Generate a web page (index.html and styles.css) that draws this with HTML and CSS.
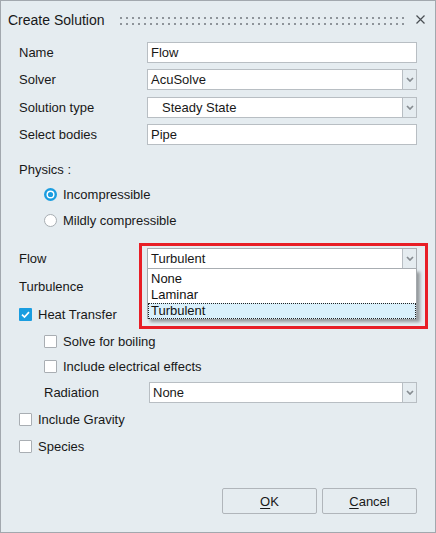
FILE: index.html
```html
<!DOCTYPE html>
<html>
<head>
<meta charset="utf-8">
<link rel="stylesheet" href="styles.css">
</head>
<body>
<div class="dialog">
  <div class="titlebar">
    <span class="title">Create Solution</span>
    <svg class="grip" height="8"><defs><pattern id="dots" width="6" height="6" patternUnits="userSpaceOnUse"><rect x="0" y="0" width="2" height="2" fill="#8e949a"/></pattern></defs><rect x="0" y="0" width="100%" height="8" fill="url(#dots)"/></svg>
    <svg class="close" width="9" height="9" viewBox="0 0 9 9"><path d="M0.5 0.5 L8.5 8.5 M8.5 0.5 L0.5 8.5" stroke="#4a4f54" stroke-width="1.2"/></svg>
  </div>

  <div class="form">
    <div class="row"><span class="label">Name</span><div class="field">Flow</div></div>
    <div class="row"><span class="label">Solver</span>
      <div class="combo"><div class="combo-text">AcuSolve</div><div class="combo-btn"><svg width="8" height="5" viewBox="0 0 8 5"><path d="M1 1 L4 4 L7 1" stroke="#868c91" stroke-width="1.7" fill="none"/></svg></div></div>
    </div>
    <div class="row"><span class="label">Solution type</span>
      <div class="combo"><div class="combo-text indent">Steady State</div><div class="combo-btn"><svg width="8" height="5" viewBox="0 0 8 5"><path d="M1 1 L4 4 L7 1" stroke="#868c91" stroke-width="1.7" fill="none"/></svg></div></div>
    </div>
    <div class="row"><span class="label">Select bodies</span><div class="field">Pipe</div></div>
  </div>

  <div class="physics-label">Physics :</div>
  <div class="option sub"><svg class="radio" width="13" height="13" viewBox="0 0 13 13"><circle cx="6.5" cy="6.5" r="6.5" fill="#1a9de0"/><circle cx="6.5" cy="6.5" r="4" fill="#fff"/><circle cx="6.5" cy="6.5" r="2.6" fill="#1a9de0"/></svg><span>Incompressible</span></div>
  <div class="option sub"><svg class="radio" width="13" height="13" viewBox="0 0 13 13"><circle cx="6.5" cy="6.5" r="6" fill="#fff" stroke="#a7adb2" stroke-width="1"/></svg><span>Mildly compressible</span></div>

  <div class="section">
    <div class="row2">
      <span class="label">Flow</span>
      <div class="combo-wrap">
        <div class="combo dark"><div class="combo-text">Turbulent</div><div class="combo-btn"><svg width="8" height="5" viewBox="0 0 8 5"><path d="M1 1 L4 4 L7 1" stroke="#868c91" stroke-width="1.7" fill="none"/></svg></div></div>
        <div class="dropdown">
          <div class="item">None</div>
          <div class="item">Laminar</div>
          <div class="item selected">Turbulent</div>
        </div>
      </div>
    </div>
    <div class="row2 tall"><span class="label">Turbulence</span></div>
    <div class="option"><span class="check on"><svg width="13" height="13" viewBox="0 0 13 13"><path d="M3 6.6 L5.5 9 L10 4.2" stroke="#fff" stroke-width="1.7" fill="none"/></svg></span><span>Heat Transfer</span></div>
    <div class="option sub2"><span class="check"></span><span>Solve for boiling</span></div>
    <div class="option sub2 short"><span class="check"></span><span>Include electrical effects</span></div>
    <div class="row3">
      <span class="label">Radiation</span>
      <div class="combo"><div class="combo-text">None</div><div class="combo-btn"><svg width="8" height="5" viewBox="0 0 8 5"><path d="M1 1 L4 4 L7 1" stroke="#868c91" stroke-width="1.7" fill="none"/></svg></div></div>
    </div>
    <div class="option"><span class="check"></span><span>Include Gravity</span></div>
    <div class="option"><span class="check"></span><span>Species</span></div>
  </div>

  <div class="footer">
    <div class="btn"><u>O</u>K</div>
    <div class="btn"><u>C</u>ancel</div>
  </div>

  <div class="highlight"></div>
</div>
</body>
</html>
```

FILE: styles.css
```css
* { box-sizing: border-box; }
html, body { margin: 0; padding: 0; }
body {
  font-family: "Liberation Sans", Arial, sans-serif;
  font-size: 13px;
  color: #181818;
  background: #e5ecf0;
}
.dialog {
  position: relative;
  width: 436px;
  height: 533px;
  border: 1px solid #a2a8ae;
  background: #e5ecf0;
  display: flex;
  flex-direction: column;
}
.titlebar {
  height: 37.5px;
  display: flex;
  align-items: center;
  padding: 0 10px 0 7px;
}
.title { font-size: 14px; white-space: nowrap; }
.grip { flex: 1; margin-left: 15px; height: 8px; margin-top: 2px; }
.close { margin-left: 8px; flex: none; }

.form {
  padding: 0 18px;
}
.row {
  height: 27.5px;
  display: grid;
  grid-template-columns: 128px 270px;
  align-items: center;
}
.field {
  height: 21px;
  border: 1px solid #b8bec3;
  background: #fff;
  padding-left: 3px;
  line-height: 19px;
}
.combo {
  height: 21px;
  border: 1px solid #b8bec3;
  background: #fff;
  display: flex;
}
.combo.dark { border-color: #a9aeb3; }
.combo-text {
  flex: 1;
  padding-left: 3px;
  line-height: 19px;
}
.combo-text.indent { padding-left: 14px; }
.combo-btn {
  width: 14px;
  border-left: 1px solid #b8bec3;
  background: #e5ecf0;
  display: flex;
  align-items: center;
  justify-content: center;
}
.physics-label {
  margin-top: 10.5px;
  height: 22px;
  line-height: 22px;
  padding-left: 18px;
}
.option {
  height: 26px;
  display: flex;
  align-items: center;
  gap: 6px;
  padding-left: 18px;
}
.option.sub { padding-left: 43px; }
.radio { flex: none; }

.section {
  margin-top: 12px;
  padding: 0 18px;
}
.section .option { height: 27px; padding-left: 0; }
.section .option.sub2 { padding-left: 25px; }
.section .option.short { height: 23px; }
.row2 {
  height: 27px;
  display: grid;
  grid-template-columns: 128px 270px;
  align-items: center;
}
.row2.tall { height: 29px; }
.row3 {
  height: 28px;
  display: grid;
  grid-template-columns: 105px 268px;
  align-items: center;
  padding-left: 25px;
}
.check {
  width: 13px;
  height: 13px;
  border: 1px solid #a9aeb3;
  background: #fff;
  border-radius: 1px;
  flex: none;
  display: block;
}
.check.on {
  border: none;
  background: #1a9de0;
}
.check svg { display: block; }

.combo-wrap { position: relative; }
.dropdown {
  position: absolute;
  left: 0;
  top: 21px;
  width: 270px;
  height: 50px;
  background: #fff;
  border: 1px solid #a4a9ad;
  border-top: none;
  box-shadow: 3px 3px 3px rgba(0, 0, 0, 0.35);
  padding-top: 2px;
  z-index: 2;
  color: #111;
}
.item {
  height: 16px;
  line-height: 16px;
  padding-left: 3px;
}
.item.selected {
  background: #d9f0fb;
  outline: 1px dotted #222;
  outline-offset: -1px;
  padding-left: 3px;
}

.footer {
  margin-top: auto;
  display: flex;
  justify-content: flex-end;
  gap: 5px;
  padding: 0 18px 18px;
}
.btn {
  width: 95px;
  height: 26px;
  border: 1px solid #b0b5ba;
  border-radius: 2px;
  background: #e5ecf0;
  display: flex;
  align-items: center;
  justify-content: center;
}
.btn u { text-decoration-thickness: 1px; text-underline-offset: 2px; }

.highlight {
  position: absolute;
  left: 138px;
  top: 242px;
  width: 289px;
  height: 86px;
  border: 3px solid #e81e26;
  pointer-events: none;
  z-index: 3;
}
```
